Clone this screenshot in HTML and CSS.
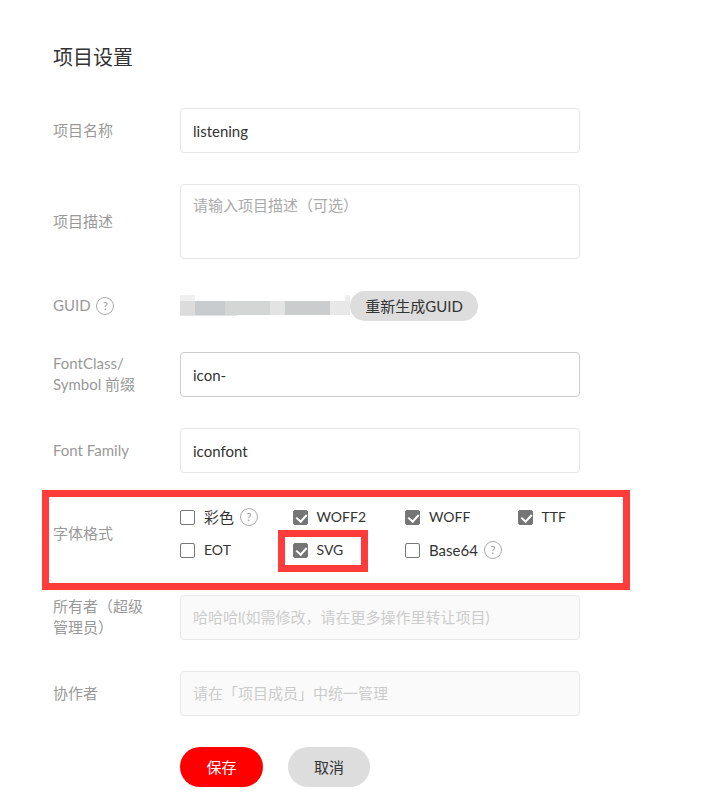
FILE: index.html
```html
<!DOCTYPE html>
<html lang="zh-CN">
<head>
    <meta charset="UTF-8">
    <meta name="viewport" content="width=device-width, initial-scale=1.0">
    <title>项目设置</title>
    <link rel="stylesheet" href="styles.css">
</head>
<body>
    <main class="settings">
        <h1>项目设置</h1>

        <div class="row">
            <label class="row-label">项目名称</label>
            <input class="field" type="text" value="listening">
        </div>

        <div class="row row-desc">
            <label class="row-label">项目描述</label>
            <textarea class="field field-area" placeholder="请输入项目描述（可选）"></textarea>
        </div>

        <div class="row">
            <label class="row-label row-label-up">GUID <span class="help help-label">?</span></label>
            <div class="guid-blur"></div>
            <button class="btn btn-small">重新生成GUID</button>
        </div>

        <div class="row">
            <label class="row-label row-label-up">FontClass/<br>Symbol 前缀</label>
            <input class="field field-focus" type="text" value="icon-">
        </div>

        <div class="row">
            <label class="row-label">Font Family</label>
            <input class="field" type="text" value="iconfont">
        </div>

        <div class="row row-formats">
            <label class="row-label">字体格式</label>
            <div class="formats">
                <label class="check"><input type="checkbox">彩色 <span class="help">?</span></label>
                <label class="check check-latin"><input type="checkbox" checked>WOFF2</label>
                <label class="check check-latin"><input type="checkbox" checked>WOFF</label>
                <label class="check check-latin"><input type="checkbox" checked>TTF</label>
                <label class="check check-latin"><input type="checkbox">EOT</label>
                <label class="check check-latin"><input type="checkbox" checked>SVG</label>
                <label class="check"><input type="checkbox">Base64 <span class="help">?</span></label>
            </div>
        </div>

        <div class="row">
            <label class="row-label row-label-up">所有者（超级<br>管理员）</label>
            <input class="field" type="text" placeholder="哈哈哈l(如需修改，请在更多操作里转让项目)" disabled>
        </div>

        <div class="row">
            <label class="row-label">协作者</label>
            <input class="field" type="text" placeholder="请在「项目成员」中统一管理" disabled>
        </div>

        <div class="actions">
            <button class="btn btn-save">保存</button>
            <button class="btn btn-cancel">取消</button>
        </div>

        <!-- red marks drawn on top of the screenshot -->
        <div class="mark mark-group"></div>
        <div class="mark mark-svg"></div>
    </main>
</body>
</html>
```

FILE: styles.css
```css
* {
    box-sizing: border-box;
}

body {
    margin: 0;
    background-color: #fff;
    color: #333;
    font-family: Lato, "Noto Sans CJK SC", sans-serif;
    font-size: 15px;
}

.settings {
    position: relative;
    height: 803px;
    padding: 43px 0 0 53px;
    overflow: hidden;
}

h1 {
    margin: 0 0 37px;
    font-size: 20px;
    font-weight: 400;
    line-height: 28px;
}

.row {
    display: flex;
    align-items: center;
    margin-bottom: 31px;
}

.row-desc {
    margin-bottom: 32px;
}

.row-label {
    flex: none;
    width: 127px;
    color: #999;
    line-height: 21px;
}

.row-label-up {
    margin-bottom: 2px;
}

.field {
    display: block;
    width: 400px;
    height: 45px;
    padding: 0 12px;
    border: 1px solid #e5e5e5;
    border-radius: 4px;
    background-color: #fff;
    color: #333;
    font-family: inherit;
    font-size: 15px;
    outline: none;
}

.field::placeholder {
    color: #aaa;
    opacity: 1;
}

.field:disabled {
    padding-bottom: 2px;
    border-color: #e8e8e8;
    background-color: #fafafa;
}

.field:disabled::placeholder {
    color: #ccc;
}

.field-area {
    height: 75px;
    padding-top: 9px;
    line-height: 22px;
    resize: none;
}

.field-focus {
    border-color: #ccc;
}

.help {
    display: inline-block;
    width: 18px;
    height: 18px;
    border: 1px solid #aaa;
    border-radius: 50%;
    color: #999;
    font-size: 11px;
    line-height: 16px;
    text-align: center;
    vertical-align: 1px;
}

.help-label {
    margin-left: 2px;
}

/* the GUID is smeared out in the screenshot */
.guid-blur {
    flex: none;
    width: 170px;
    height: 22px;
    background:
        linear-gradient(#eee, #eee) 165px 0 / 5px 6px no-repeat,
        linear-gradient(#f0f0f0, #f0f0f0) 0 0 / 15px 6px no-repeat,
        linear-gradient(#e4e4e4, #e4e4e4) 0 20px / 57px 1px no-repeat,
        linear-gradient(90deg, #dcdcdc 0 15px, #c9cccf 15px 45px, #d4d5d5 45px 90px, #e3e3e3 90px 105px, #cbcccd 105px 150px, #e8e8e8 150px 170px) 0 6px / 170px 14px no-repeat;
}

.btn {
    padding: 0 0 2px;
    border: none;
    border-radius: 20px;
    font-family: inherit;
    font-size: 15px;
    cursor: pointer;
}

.btn-small {
    width: 128px;
    height: 30px;
    border-radius: 15px;
    background-color: #ddd;
    color: #333;
}

.row-formats {
    margin-bottom: 32px;
}

.formats {
    display: grid;
    grid-template-columns: repeat(4, 112.5px);
    grid-auto-rows: 26px;
    row-gap: 7px;
}

.check {
    display: flex;
    align-items: center;
    line-height: 26px;
}

.check-latin {
    font-size: 14px;
}

.check .help {
    margin-left: 6px;
}

.check input {
    position: relative;
    flex: none;
    width: 15px;
    height: 15px;
    margin: 0 9px 0 0;
    border: 1px solid #777;
    border-radius: 2px;
    background-color: #fff;
    appearance: none;
}

.check input:checked {
    background-color: #757575;
}

.check input:checked::after {
    content: "";
    position: absolute;
    left: 4px;
    top: 1px;
    width: 5px;
    height: 8px;
    border: solid #fff;
    border-width: 0 2px 2px 0;
    transform: rotate(42deg);
}

.actions {
    display: flex;
    gap: 25px;
    padding-left: 127px;
}

.btn-save {
    width: 83px;
    height: 40px;
    background-color: #f00;
    color: #fff;
}

.btn-cancel {
    width: 82px;
    height: 40px;
    background-color: #ddd;
    color: #333;
}

.mark {
    position: absolute;
    border: 7px solid #ff3b3b;
    pointer-events: none;
}

.mark-group {
    left: 42px;
    top: 490px;
    width: 588px;
    height: 100px;
}

.mark-svg {
    left: 278px;
    top: 530px;
    width: 90px;
    height: 42px;
}
```
